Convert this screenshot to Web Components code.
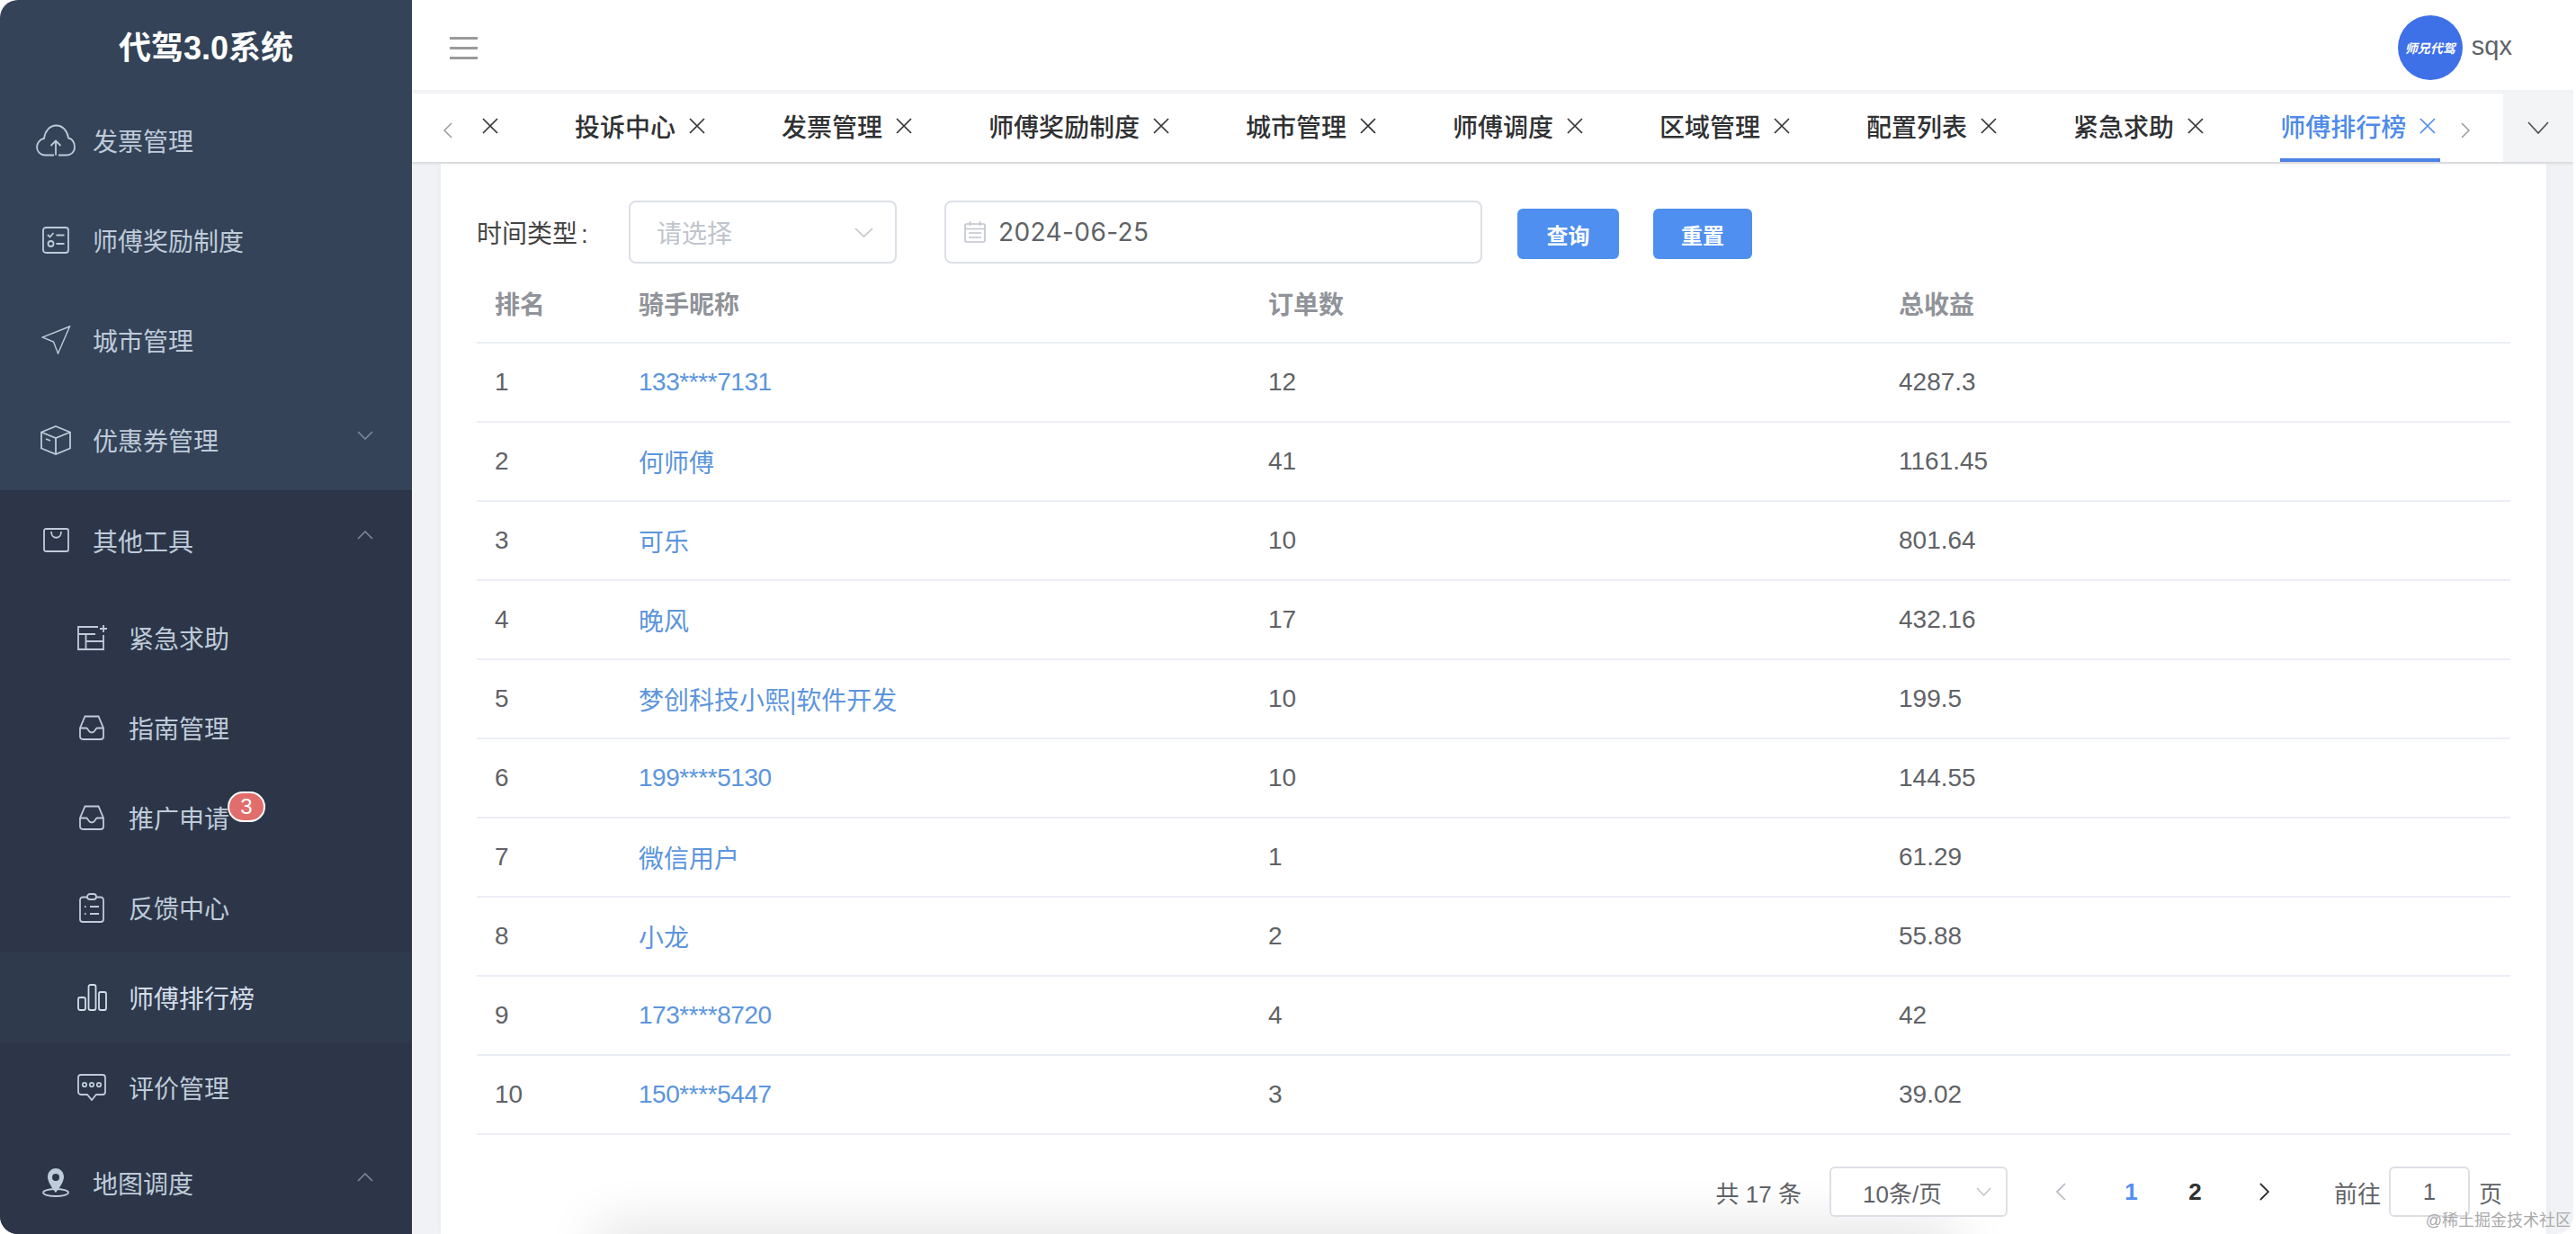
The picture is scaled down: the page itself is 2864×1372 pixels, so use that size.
<!DOCTYPE html>
<html lang="zh-CN">
<head>
<meta charset="utf-8">
<title>代驾3.0系统</title>
<style>
  html, body { margin: 0; padding: 0; background: #fff; overflow: hidden; }
  body { font-family: "Liberation Sans", "Noto Sans CJK SC", sans-serif; font-size: 28px; }
</style>
</head>
<body>
<app-shell></app-shell>

<script>
// Icons for the side menu: [width, height, svg content]
const ICONS = {
    cloud: [44, 36, `<path d="M20 34.500H10C5 34.500 1 30.500 1 25.500S5 16.500 9 16C10 8 15 1.500 22.500 1.500S35 8 36 15.500C40 16 43 20 43 25.500S39 34.500 33.500 34.500H25"/><path d="M22 34.500V19M16.500 24l5.500-5.500 5.500 5.500"/>`],
    check: [30, 30, `<rect x="1" y="1" width="28" height="28" rx="3"/><path d="M6 9l2.500 2.500 4-4.500M15.500 9.500h9M15.500 19h9"/><circle cx="9.500" cy="19" r="3"/>`],
    send: [33, 32, `<path stroke-width="1.400" d="M31.500 1L1 13l12.500 5 5 13z"/>`],
    box: [34, 33, `<path d="M17 1l16 6.500v18L17 32 1 25.500v-18zM1 7.500L17 14l16-6.500M17 14v18M6 15l5 2"/>`],
    bag: [29, 27, `<rect x="1" y="1" width="27" height="25" rx="2"/><path d="M9 4c0 9 11 9 11 0"/>`],
    table: [33, 28, `<path d="M23 2H1v25h28V11M1 10h19M9.500 10v17M9.500 18H29M29 0v8M25 4h8"/>`],
    inbox: [28, 28, `<path d="M6.500 1.500h15L27 14.500V24a3 3 0 0 1-3 3H4a3 3 0 0 1-3-3v-9.500zM1 14.500h7c2 0 2 5 6 5s4-5 6-5h7"/>`],
    clip: [28, 33, `<path d="M9 4.500H4a3 3 0 0 0-3 3V29a3 3 0 0 0 3 3h20a3 3 0 0 0 3-3V7.500a3 3 0 0 0-3-3h-5"/><rect x="9" y="1" width="10" height="6" rx="3"/><path d="M6 15h1.500M12 15h10M6 23h1.500M12 23h10"/>`],
    bars: [33, 30, `<rect x="1" y="15" width="8" height="14" rx="2"/><rect x="12.500" y="1" width="8" height="28" rx="2"/><rect x="24" y="9" width="8" height="20" rx="2"/>`],
    chat: [32, 30, `<path d="M4 1h24a3 3 0 0 1 3 3v16a3 3 0 0 1-3 3h-7l-5 6-5-6H4a3 3 0 0 1-3-3V4a3 3 0 0 1 3-3z"/><circle cx="8" cy="12" r="2.200"/><circle cx="16" cy="12" r="2.200"/><circle cx="24" cy="12" r="2.200"/>`],
    pin: [30, 32, `<ellipse cx="15" cy="27" rx="14" ry="4"/><path fill="currentColor" stroke="none" fill-rule="evenodd" d="M15 0C9.500 0 6 4.500 6 9.500 6 16.500 15 27 15 27s9-10.500 9-17.500C24 4.500 20.500 0 15 0zm0 6a4 4 0 1 1 0 8 4 4 0 0 1 0-8z"/>`]
};

function chevron(w, h, dir, color, sw) {
    const d = {
        down: `M1 1L${w / 2} ${h - 1}L${w - 1} 1`,
        up: `M1 ${h - 1}L${w / 2} 1L${w - 1} ${h - 1}`,
        left: `M${w - 1} 1L1 ${h / 2}L${w - 1} ${h - 1}`,
        right: `M1 1L${w - 1} ${h / 2}L1 ${h - 1}`
    }[dir];
    return `<svg width="${w}" height="${h}" viewBox="0 0 ${w} ${h}" fill="none" stroke="${color}" stroke-width="${sw}"><path d="${d}"/></svg>`;
}

// MENU
class MenuItem extends HTMLElement {
    constructor() {
        super();
        this.attachShadow({ mode: "open" });
    }

    connectedCallback() {
        const sub = this.hasAttribute("sub");
        const ic = ICONS[this.getAttribute("icon")];
        const arrow = this.getAttribute("arrow");
        const badge = this.getAttribute("badge");
        this.shadowRoot.innerHTML = `
            <style>
                :host {
                    display: flex;
                    align-items: center;
                    height: ${sub ? "100px" : "111.250px"};
                    color: #bfcbd9;
                    font-size: 28px;
                    position: relative;
                }
                :host([active]) { background: #2f3a4d; color: #d3dce8; }
                .ico { width: 48px; margin-left: ${sub ? "78px" : "38px"}; margin-right: 17px; display: flex; justify-content: center; }
                svg { display: block; }
                .txt { white-space: nowrap; position: relative; }
                .badge {
                    position: absolute;
                    left: 110px;
                    top: -9px;
                    box-sizing: border-box;
                    width: 42px;
                    height: 34px;
                    border-radius: 17px;
                    border: 2px solid #fff;
                    background: #e26d6d;
                    color: #fff;
                    font-size: 24px;
                    line-height: 30px;
                    text-align: center;
                }
                .arrow { position: absolute; left: 397px; top: 45px; }
            </style>
            <div class="ico"><svg width="${ic[0]}" height="${ic[1]}" viewBox="0 0 ${ic[0]} ${ic[1]}" fill="none" stroke="currentColor" stroke-width="1.800">${ic[2]}</svg></div>
            <span class="txt"><slot></slot>${badge ? `<span class="badge">${badge}</span>` : ""}</span>
            ${arrow ? `<span class="arrow">${chevron(18, 10, arrow, "#7d8a9c", 1.600)}</span>` : ""}
        `;
    }
}
customElements.define("menu-item", MenuItem);

class SideMenu extends HTMLElement {
    constructor() {
        super();
        this.attachShadow({ mode: "open" });
        this.shadowRoot.innerHTML = `
            <style>
                :host {
                    display: flex;
                    flex-direction: column;
                    width: 458px;
                    flex: none;
                    background: #344358;
                    overflow: hidden;
                }
                .logo {
                    height: 100px;
                    display: flex;
                    align-items: center;
                    justify-content: center;
                    color: #fff;
                    font-size: 36px;
                    font-weight: 700;
                }
                .dark { flex: 1; background: #2c3648; }
                .subs { padding-top: 3px; }
            </style>
            <div class="logo">代驾3.0系统</div>
            <menu-item icon="cloud">发票管理</menu-item>
            <menu-item icon="check">师傅奖励制度</menu-item>
            <menu-item icon="send">城市管理</menu-item>
            <menu-item icon="box" arrow="down">优惠券管理</menu-item>
            <div class="dark">
                <menu-item icon="bag" arrow="up">其他工具</menu-item>
                <div class="subs">
                    <menu-item sub icon="table">紧急求助</menu-item>
                    <menu-item sub icon="inbox">指南管理</menu-item>
                    <menu-item sub icon="inbox" badge="3">推广申请</menu-item>
                    <menu-item sub icon="clip">反馈中心</menu-item>
                    <menu-item sub icon="bars" active>师傅排行榜</menu-item>
                    <menu-item sub icon="chat">评价管理</menu-item>
                </div>
                <menu-item icon="pin" arrow="up">地图调度</menu-item>
            </div>
        `;
    }
}
customElements.define("side-menu", SideMenu);

// TOPO
class TopBar extends HTMLElement {
    constructor() {
        super();
        this.attachShadow({ mode: "open" });
        this.shadowRoot.innerHTML = `
            <style>
                :host {
                    display: flex;
                    align-items: center;
                    justify-content: space-between;
                    height: 100px;
                    box-sizing: border-box;
                    padding: 6px 68px 0 42px;
                    background: #fff;
                    flex: none;
                }
                .burger { width: 31px; height: 25px; display: flex; flex-direction: column; justify-content: space-between; }
                .burger i { display: block; height: 3px; background: #9a9a9a; }
                .user { display: flex; align-items: center; gap: 10px; }
                .avatar {
                    width: 72px;
                    height: 72px;
                    border-radius: 50%;
                    background: #3e70e8;
                    color: #fff;
                    font-size: 14px;
                    font-weight: 700;
                    font-style: italic;
                    display: flex;
                    align-items: center;
                    justify-content: center;
                    white-space: nowrap;
                }
                .name { color: #5f6266; font-size: 29px; margin-top: -4px; }
            </style>
            <div class="burger"><i></i><i></i><i></i></div>
            <div class="user"><div class="avatar">师兄代驾</div><span class="name">sqx</span></div>
        `;
    }
}
customElements.define("top-bar", TopBar);

// ABAS
class TabStrip extends HTMLElement {
    constructor() {
        super();
        this.attachShadow({ mode: "open" });
        this.abas = ["投诉中心", "发票管理", "师傅奖励制度", "城市管理", "师傅调度", "区域管理", "配置列表", "紧急求助", "师傅排行榜"];
        const x = c => `<svg class="x" width="28" height="28" viewBox="0 0 28 28" fill="none" stroke="${c}" stroke-width="1.700"><path d="M6 6l16 16M22 6L6 22"/></svg>`;
        const html = this.abas.map((t, i) => {
            const on = i === this.abas.length - 1;
            return `<div class="tab ${on ? "on" : ""}"><div class="in"><span>${t}</span>${x(on ? "#4d8bea" : "#333")}</div></div>`;
        }).join("");
        this.shadowRoot.innerHTML = `
            <style>
                :host {
                    display: flex;
                    height: 80px;
                    flex: none;
                    background: #fff;
                    border-top: 4px solid #f2f3f5;
                    box-sizing: border-box;
                    box-shadow: 0 2px 3px rgba(0,0,0,.11);
                    position: relative;
                    z-index: 2;
                }
                .arr { display: flex; align-items: center; justify-content: center; flex: none; padding-top: 6px; }
                .strip { flex: 1; display: flex; overflow: hidden; min-width: 0; }
                .tab { flex: none; padding: 0 40px; height: 76px; box-sizing: border-box; color: #303133; font-weight: 500; }
                .tab.first { padding-left: 1px; }
                .in { display: flex; align-items: center; height: 100%; box-sizing: border-box; padding-bottom: 4px; }
                .in span { margin-right: 10px; }
                .tab.on { color: #4d8bea; }
                .tab.on .in { border-bottom: 4px solid #4d82e6; padding-bottom: 0; }
                .x { display: block; }
                .more { width: 78px; flex: none; margin-left: 22px; background: #f3f4f6; display: flex; align-items: center; justify-content: center; }
            </style>
            <div class="arr" style="width:72px;padding-left:8px;box-sizing:border-box">${chevron(10, 18, "left", "#999", 1.500)}</div>
            <div class="strip">
                <div class="tab first"><div class="in">${x("#333")}</div></div>
                ${html}
            </div>
            <div class="arr" style="width:40px">${chevron(10, 18, "right", "#999", 1.500)}</div>
            <div class="more">${chevron(24, 14, "down", "#555", 1.800)}</div>
        `;
    }
}
customElements.define("tab-strip", TabStrip);

// FILTRO
class FilterBar extends HTMLElement {
    constructor() {
        super();
        this.attachShadow({ mode: "open" });
        this.shadowRoot.innerHTML = `
            <style>
                :host { display: flex; align-items: center; height: 70px; color: #606266; }
                .label { width: 169px; color: #444; flex: none; }
                .label b { font-weight: 400; margin-left: 4px; }
                .input {
                    box-sizing: border-box;
                    height: 70px;
                    border: 2px solid #dcdfe6;
                    border-radius: 8px;
                    display: flex;
                    align-items: center;
                    flex: none;
                }
                .sel { width: 298px; padding: 0 24px 0 29px; justify-content: space-between; color: #c0c4cc; }
                .date { width: 598px; margin-left: 53px; padding-left: 20px; gap: 14px; font-family: Inter, "Liberation Sans", sans-serif; font-size: 28px; letter-spacing: .4px; color: #606266; }
                .date svg { display: block; }
                .btn {
                    flex: none;
                    height: 56px;
                    border-radius: 6px;
                    background: #4e8ff0;
                    color: #fff;
                    font-size: 24px;
                    font-weight: 700;
                    display: flex;
                    align-items: center;
                    justify-content: center;
                    margin-top: 4px;
                }
            </style>
            <span class="label">时间类型<b>:</b></span>
            <div class="input sel"><span>请选择</span>${chevron(21, 11, "down", "#c0c4cc", 1.600)}</div>
            <div class="input date">
                <svg width="24" height="24" viewBox="0 0 24 24" fill="none" stroke="#c0c4cc" stroke-width="1.600"><rect x="1" y="3" width="22" height="20" rx="1.500"/><path d="M1 8.500h22M6.500 0v5M17.500 0v5M5 13h14M5 18h14" /></svg>
                <span>2024-06-25</span>
            </div>
            <div class="btn" style="width:113px;margin-left:39px">查询</div>
            <div class="btn" style="width:110px;margin-left:38px">重置</div>
        `;
    }
}
customElements.define("filter-bar", FilterBar);

// TABELA
class RankTable extends HTMLElement {
    constructor() {
        super();
        this.attachShadow({ mode: "open" });
        // Bloco de linhas (poderia puxar de um banco)
        this.linhas = [
            ["133****7131", 12, "4287.3"],
            ["何师傅", 41, "1161.45"],
            ["可乐", 10, "801.64"],
            ["晚风", 17, "432.16"],
            ["梦创科技小熙|软件开发", 10, "199.5"],
            ["199****5130", 10, "144.55"],
            ["微信用户", 1, "61.29"],
            ["小龙", 2, "55.88"],
            ["173****8720", 4, "42"],
            ["150****5447", 3, "39.02"]
        ];
        const rows = this.linhas.map((l, i) => `
            <div class="row">
                <span>${i + 1}</span><a class="${l[0].includes("*") ? "fone" : ""}">${l[0]}</a><span>${l[1]}</span><span>${l[2]}</span>
            </div>`).join("");
        this.shadowRoot.innerHTML = `
            <style>
                :host { display: block; color: #606266; margin-top: 1px; }
                .row {
                    display: grid;
                    grid-template-columns: 160px 700px 701px 1fr;
                    height: 88px;
                    box-sizing: border-box;
                    border-bottom: 2px solid #ebeef5;
                    align-items: center;
                }
                .row > * { padding-left: 20px; }
                .head { color: #909399; font-weight: 700; }
                a { color: #5c95dd; }
                .fone { letter-spacing: -.45px; }
            </style>
            <div class="row head"><span>排名</span><span>骑手昵称</span><span>订单数</span><span>总收益</span></div>
            ${rows}
        `;
    }
}
customElements.define("rank-table", RankTable);

// PAGINACAO
class PagerBar extends HTMLElement {
    constructor() {
        super();
        this.attachShadow({ mode: "open" });
        this.shadowRoot.innerHTML = `
            <style>
                :host {
                    display: flex;
                    align-items: center;
                    justify-content: flex-end;
                    height: 56px;
                    margin-top: 35px;
                    padding-right: 9px;
                    font-size: 26px;
                    color: #606266;
                    position: relative;
                    z-index: 1;
                }
                .box {
                    box-sizing: border-box;
                    height: 56px;
                    border: 2px solid #dcdfe6;
                    border-radius: 6px;
                    background: #fff;
                    display: flex;
                    align-items: center;
                    flex: none;
                }
                .size { width: 198px; margin-left: 31px; padding: 0 16px 0 35px; justify-content: space-between; }
                .b { width: 71px; display: flex; align-items: center; justify-content: center; font-weight: 700; color: #303133; flex: none; }
                .jump { width: 90px; justify-content: center; margin: 0 10px 0 9px; }
            </style>
            <span>共 17 条</span>
            <div class="box size"><span>10条/页</span>${chevron(17, 10, "down", "#c0c4cc", 1.500)}</div>
            <div class="b" style="margin:0 7px 0 24px">${chevron(11, 20, "left", "#b4b8bf", 1.600)}</div>
            <div class="b" style="color:#4e8ff0">1</div>
            <div class="b">2</div>
            <div class="b" style="margin:0 42px 0 6px">${chevron(11, 20, "right", "#303133", 1.800)}</div>
            <span>前往</span>
            <div class="box jump">1</div>
            <span>页</span>
        `;
    }
}
customElements.define("pager-bar", PagerBar);

// CASCA
class AppShell extends HTMLElement {
    constructor() {
        super();
        this.attachShadow({ mode: "open" });
        this.shadowRoot.innerHTML = `
            <style>
                :host {
                    display: flex;
                    width: 2861px;
                    height: 1372px;
                    border-radius: 20px;
                    overflow: hidden;
                    position: relative;
                }
                .main { flex: 1; display: flex; flex-direction: column; min-width: 0; }
                .content { flex: 1; min-height: 0; background: #f1f2f5; padding: 2px 30px 0 32px; overflow: hidden; }
                .card {
                    background: #fff;
                    height: 100%;
                    box-sizing: border-box;
                    padding: 41px 40px 0;
                    box-shadow: 0 0 8px rgba(0,0,0,.04);
                    position: relative;
                    overflow: hidden;
                }
                .sombra {
                    position: absolute;
                    left: 180px;
                    width: 1500px;
                    top: 100%;
                    height: 30px;
                    box-shadow: 0 0 60px 6px rgba(0,0,0,.14);
                }
                .marca {
                    position: absolute;
                    right: 2px;
                    bottom: 4px;
                    font-size: 18px;
                    color: #aaaaaa;
                    white-space: nowrap;
                    z-index: 3;
                }
            </style>
            <side-menu></side-menu>
            <div class="main">
                <top-bar></top-bar>
                <tab-strip></tab-strip>
                <div class="content">
                    <div class="card">
                        <div class="sombra"></div>
                        <filter-bar></filter-bar>
                        <rank-table></rank-table>
                        <pager-bar></pager-bar>
                    </div>
                </div>
            </div>
            <div class="marca">@稀土掘金技术社区</div>
        `;
    }
}
customElements.define("app-shell", AppShell);
</script>
</body>
</html>
